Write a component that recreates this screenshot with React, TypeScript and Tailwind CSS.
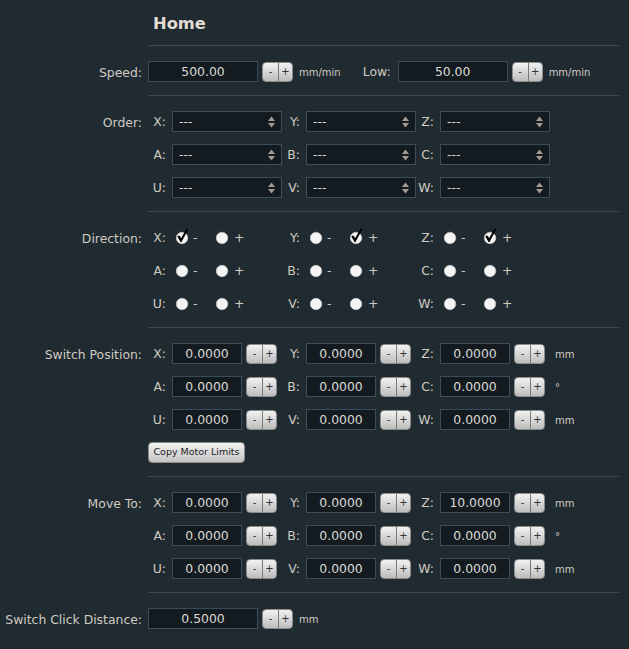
import React from "react";

const FONT = { fontFamily: '"DejaVu Sans", Verdana, sans-serif' };

function Stepper() {
  return (
    <div className="flex h-[20px] w-[31px] shrink-0 overflow-hidden rounded-[4px] border border-[#8c8c8c] bg-linear-to-b from-[#f2f2f2] to-[#bdbdbd] text-[10px] leading-none text-[#333]">
      <div className="flex w-[15px] items-center justify-center">-</div>
      <div className="w-px bg-[#7a7a7a]" />
      <div className="flex flex-1 items-center justify-center">+</div>
    </div>
  );
}

function NumInput({ value, w }: { value: string; w: string }) {
  return (
    <div
      className={`${w} flex h-[21px] shrink-0 items-center justify-center border border-[#3c4c59] bg-[#131a20] pt-[1px] text-[12.4px] text-[#dcdad4]`}
    >
      {value}
    </div>
  );
}

function Select() {
  return (
    <div className="relative flex h-[21px] w-[110px] shrink-0 items-center border border-[#3c4c59] bg-[#131a20] pl-[6px] pt-[1px] text-[12.4px] text-[#dcdad4]">
      ---
      <svg className="absolute right-[6px] top-[4px]" width="7" height="12" viewBox="0 0 7 12">
        <path d="M3.5 0.5 L7 5 L0 5 Z" fill="#a39b93" />
        <path d="M0 7 L7 7 L3.5 11.5 Z" fill="#a39b93" />
      </svg>
    </div>
  );
}

function Radio({ checked }: { checked?: boolean }) {
  return (
    <svg width="14" height="18" viewBox="0 0 14 18" className="shrink-0 -mt-[3px]">
      <circle cx="6" cy="11" r="5.8" fill="#f4f4f4" stroke="#c8c8c8" strokeWidth="0.6" />
      {checked && (
        <path
          d="M1.8 9.4 L5 15 L11.8 2.2 L10.8 2 L5.1 12.2 L3.4 9 Z"
          fill="#000"
          stroke="#000"
          strokeWidth="1"
          strokeLinejoin="round"
        />
      )}
    </svg>
  );
}

function Cell({ label, children }: { label: string; children: React.ReactNode }) {
  return (
    <div className="flex h-[21px] w-[134px] shrink-0 items-center">
      <div className="flex w-[18px] shrink-0 justify-end whitespace-nowrap pt-[1px] text-[12.4px] text-[#cfcac2]">
        {label}
      </div>
      <div className="ml-[6px] flex items-center">{children}</div>
    </div>
  );
}

function Section({
  label,
  children,
  last,
}: {
  label: string;
  children: React.ReactNode;
  last?: boolean;
}) {
  return (
    <div className="flex">
      <div className="w-[142px] shrink-0 whitespace-nowrap pt-[16px] text-right text-[12.4px] leading-[21px] text-[#cfcac2]">
        {label}
      </div>
      <div
        className={`ml-[6px] flex w-[471px] flex-col gap-[12px] pt-[15px] pb-[13px] ${
          last ? "" : "border-b border-[#3a4a56]"
        }`}
      >
        {children}
      </div>
    </div>
  );
}

function Row({ children }: { children: React.ReactNode }) {
  return <div className="flex h-[21px] items-center">{children}</div>;
}

function DirCell({ label, sel }: { label: string; sel: "-" | "+" | null }) {
  return (
    <Cell label={label}>
      <div className="flex items-center pt-[1px] text-[12.4px] text-[#cfcac2]">
        <div className="ml-[4px]">
          <Radio checked={sel === "-"} />
        </div>
        <span className="ml-[3px] w-[23px]">-</span>
        <Radio checked={sel === "+"} />
        <span className="ml-[4px]">+</span>
      </div>
    </Cell>
  );
}

function PosCell({ label, value }: { label: string; value: string }) {
  return (
    <Cell label={label}>
      <NumInput value={value} w="w-[70px]" />
      <div className="ml-[4px]">
        <Stepper />
      </div>
    </Cell>
  );
}

function Unit({ children }: { children: React.ReactNode }) {
  return <span className="ml-[5px] pt-[1px] text-[10px] text-[#cfcac2]">{children}</span>;
}

export default function App() {
  return (
    <div className="min-h-[649px] w-[629px] bg-[#202a31]" style={FONT}>
      <div className="flex">
        <div className="w-[148px] shrink-0" />
        <div className="flex h-[46px] w-[471px] items-center border-b border-[#3a4a56] pl-[5px] pt-[3px] text-[16.3px] font-bold text-[#e3dcd3]">
          Home
        </div>
      </div>

      <Section label="Speed:">
        <Row>
          <NumInput value="500.00" w="w-[110px]" />
          <div className="ml-[4px]">
            <Stepper />
          </div>
          <span className="ml-[6px] pt-[1px] text-[10px] text-[#cfcac2]">mm/min</span>
          <span className="ml-[22px] pt-[1px] text-[12.4px] text-[#cfcac2]">Low:</span>
          <div className="ml-[7px]">
            <NumInput value="50.00" w="w-[110px]" />
          </div>
          <div className="ml-[4px]">
            <Stepper />
          </div>
          <span className="ml-[6px] pt-[1px] text-[10px] text-[#cfcac2]">mm/min</span>
        </Row>
      </Section>

      <Section label="Order:">
        {[
          ["X:", "Y:", "Z:"],
          ["A:", "B:", "C:"],
          ["U:", "V:", "W:"],
        ].map((r) => (
          <Row key={r[0]}>
            {r.map((l) => (
              <Cell key={l} label={l}>
                <Select />
              </Cell>
            ))}
          </Row>
        ))}
      </Section>

      <Section label="Direction:">
        <Row>
          <DirCell label="X:" sel="-" />
          <DirCell label="Y:" sel="+" />
          <DirCell label="Z:" sel="+" />
        </Row>
        <Row>
          <DirCell label="A:" sel={null} />
          <DirCell label="B:" sel={null} />
          <DirCell label="C:" sel={null} />
        </Row>
        <Row>
          <DirCell label="U:" sel={null} />
          <DirCell label="V:" sel={null} />
          <DirCell label="W:" sel={null} />
        </Row>
      </Section>

      <Section label="Switch Position:">
        {[
          [["X:", "Y:", "Z:"], "mm"],
          [["A:", "B:", "C:"], "°"],
          [["U:", "V:", "W:"], "mm"],
        ].map(([labels, unit]) => (
          <Row key={(labels as string[])[0]}>
            {(labels as string[]).map((l) => (
              <PosCell key={l} label={l} value="0.0000" />
            ))}
            <Unit>{unit as string}</Unit>
          </Row>
        ))}
        <div className="flex">
          <div className="flex h-[21px] w-[97px] items-center justify-center rounded-[4px] border border-[#8c8c8c] bg-linear-to-b from-[#f2f2f2] to-[#c4c4c4] text-[9.5px] text-[#222]">
            Copy Motor Limits
          </div>
        </div>
      </Section>

      <Section label="Move To:">
        <Row>
          <PosCell label="X:" value="0.0000" />
          <PosCell label="Y:" value="0.0000" />
          <PosCell label="Z:" value="10.0000" />
          <Unit>mm</Unit>
        </Row>
        <Row>
          <PosCell label="A:" value="0.0000" />
          <PosCell label="B:" value="0.0000" />
          <PosCell label="C:" value="0.0000" />
          <Unit>°</Unit>
        </Row>
        <Row>
          <PosCell label="U:" value="0.0000" />
          <PosCell label="V:" value="0.0000" />
          <PosCell label="W:" value="0.0000" />
          <Unit>mm</Unit>
        </Row>
      </Section>

      <Section label="Switch Click Distance:" last>
        <Row>
          <NumInput value="0.5000" w="w-[110px]" />
          <div className="ml-[4px]">
            <Stepper />
          </div>
          <span className="ml-[6px] pt-[1px] text-[10px] text-[#cfcac2]">mm</span>
        </Row>
      </Section>
    </div>
  );
}
